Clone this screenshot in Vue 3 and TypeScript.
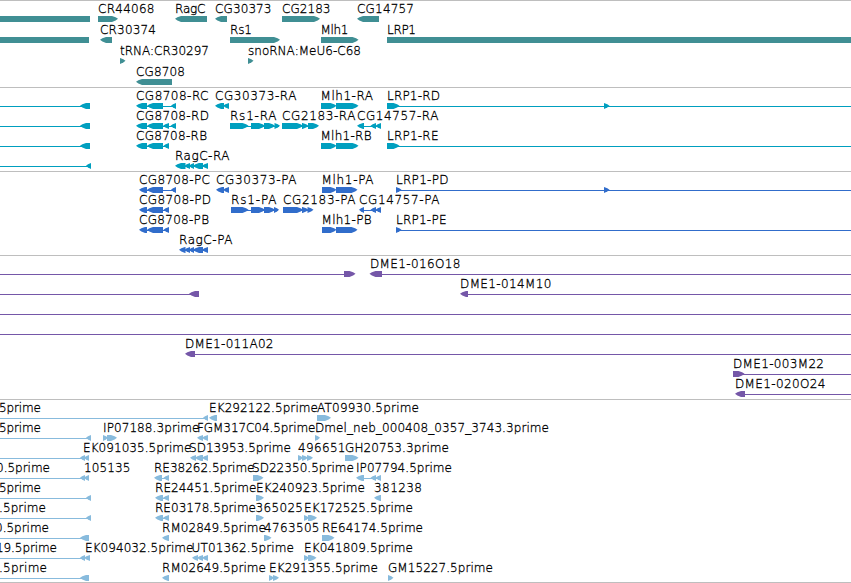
<template>
  <main class="browser">
    <section v-for="track in tracks" :key="track.name" class="track" :class="`track--${track.name}`">
      <svg v-for="(row, i) in track.rows" :key="i" class="track-row">
        <!-- Introns / clone spans -->
        <rect
          v-for="([from, to], n) in row.lines ?? []"
          :key="`l${n}`"
          :x="from"
          y="18"
          :width="to - from"
          height="1"
        />

        <!-- Exons -->
        <path v-for="(shape, n) in row.shapes" :key="`s${n}`" :d="shapePath(shape)" />

        <!-- Labels -->
        <text
          v-for="([from, to, name], n) in row.labels"
          :key="`t${n}`"
          class="label"
          :x="from"
          y="12"
          :textLength="to - from + 0.5"
        >{{ name }}</text>
      </svg>
    </section>
  </main>
</template>

<script setup lang="ts">
type Strand = '+' | '-' | '.'
type Shape = [from: number, to: number, strand: Strand]
type Label = [from: number, to: number, name: string]

interface Row {
  labels: Label[]
  shapes: Shape[]
  lines?: [number, number][]
}

interface Track {
  name: string
  rows: Row[]
}

const END = 851

const tracks: Track[] = [
  {
    name: 'gene',
    rows: [
      {
        labels: [[98, 154, 'CR44068'], [175, 205, 'RagC'], [215, 271, 'CG30373'], [282, 330, 'CG2183'], [357, 413.5, 'CG14757']],
        shapes: [[0, 90, '.'], [98, 118, '+'], [175, 207, '-'], [215, 227, '-'], [282, 320, '+'], [357, 379, '-']]
      },
      {
        labels: [[100, 155.5, 'CR30374'], [230, 251.5, 'Rs1'], [320.5, 348, 'Mlh1'], [387, 415.5, 'LRP1']],
        shapes: [[0, 89, '.'], [100, 112, '-'], [230, 280, '+'], [321, 358.5, '+'], [387, END, '.']]
      },
      {
        labels: [[120, 208.5, 'tRNA:CR30297'], [248, 360.5, 'snoRNA:MeU6-C68']],
        shapes: [[120, 125.5, '+'], [248, 253.5, '+']]
      },
      {
        labels: [[136, 184.5, 'CG8708']],
        shapes: [[136, 172, '-']]
      }
    ]
  },
  {
    name: 'transcript',
    rows: [
      {
        labels: [[136, 208, 'CG8708-RC'], [215, 296, 'CG30373-RA'], [320.5, 372.5, 'Mlh1-RA'], [387, 439.5, 'LRP1-RD']],
        lines: [[0, 82], [138, 174], [387, END]],
        shapes: [[80, 90, '-'], [136, 147, '-'], [147, 163, '-'], [171, 176, '-'], [215, 224, '-'], [223, 229, '-'], [321, 336.5, '+'], [336, 358.5, '+'], [387, 399.5, '+'], [604, 609.5, '+']]
      },
      {
        labels: [[136, 208.5, 'CG8708-RD'], [230, 276, 'Rs1-RA'], [282, 355, 'CG2183-RA'], [357, 438, 'CG14757-RA']],
        lines: [[0, 82], [138, 174], [230, 279], [282, 310], [360, 380]],
        shapes: [[80, 90, '-'], [136, 147, '-'], [147, 163, '-'], [163, 169, '-'], [170.5, 176, '-'], [230, 248.5, '+'], [251, 265, '+'], [264, 275, '+'], [274.5, 280, '+'], [282, 303, '+'], [302, 308.5, '+'], [308, 319, '+'], [357, 364, '-'], [370.5, 376, '-'], [375.5, 381, '-']]
      },
      {
        labels: [[136, 206.5, 'CG8708-RB'], [320.5, 371, 'Mlh1-RB'], [387, 438, 'LRP1-RE']],
        lines: [[0, 82], [138, 167], [387, END]],
        shapes: [[80, 90, '-'], [136, 147, '-'], [147, 163, '-'], [163.5, 169, '-'], [321, 336.5, '+'], [336, 358.5, '+'], [387, 399.5, '+']]
      },
      {
        labels: [[175, 229, 'RagC-RA']],
        lines: [[0, 88], [178, 206]],
        shapes: [[86, 91, '-'], [175, 185.5, '-'], [184.5, 190, '-'], [189, 194, '-'], [193, 203, '-'], [202, 208, '-']]
      }
    ]
  },
  {
    name: 'protein',
    rows: [
      {
        labels: [[139, 209.5, 'CG8708-PC'], [216, 296, 'CG30373-PA'], [321.5, 373, 'Mlh1-PA'], [396, 448, 'LRP1-PD']],
        lines: [[141, 174], [396, END]],
        shapes: [[139, 147, '-'], [147, 163, '-'], [171, 176, '-'], [216, 224, '-'], [223, 229, '-'], [322, 336.5, '+'], [336, 357.5, '+'], [396, 401.5, '+'], [604, 609.5, '+']]
      },
      {
        labels: [[139, 210.5, 'CG8708-PD'], [231, 276, 'Rs1-PA'], [283, 355, 'CG2183-PA'], [359, 439, 'CG14757-PA']],
        lines: [[141, 167], [231, 278], [283, 311], [361, 380]],
        shapes: [[139, 147, '-'], [147, 163, '-'], [163.5, 169, '-'], [231, 248.5, '+'], [251, 265, '+'], [264, 275, '+'], [274, 279, '+'], [283, 303, '+'], [302, 308.5, '+'], [307.5, 313.5, '+'], [359, 364, '-'], [370.5, 376, '-'], [375.5, 381, '-']]
      },
      {
        labels: [[139, 208.5, 'CG8708-PB'], [321.5, 371, 'Mlh1-PB'], [396, 446, 'LRP1-PE']],
        lines: [[141, 167], [396, END]],
        shapes: [[139, 147, '-'], [147, 163, '-'], [163.5, 169, '-'], [322, 336.5, '+'], [336, 357.5, '+'], [396, 401.5, '+']]
      },
      {
        labels: [[179, 232, 'RagC-PA']],
        lines: [[181, 206]],
        shapes: [[179, 185.5, '-'], [184.5, 190, '-'], [189, 194, '-'], [193, 203, '-'], [202, 208, '-']]
      }
    ]
  },
  {
    name: 'clone',
    rows: [
      {
        labels: [[370, 460, 'DME1-016O18']],
        lines: [[0, 346], [372, END]],
        shapes: [[344, 355.5, '+'], [369.5, 382, '-']]
      },
      {
        labels: [[460, 551, 'DME1-014M10']],
        lines: [[0, 192], [462, END]],
        shapes: [[189, 199, '-'], [460, 468, '-']]
      },
      { labels: [], lines: [[0, END]], shapes: [] },
      { labels: [], lines: [[0, END]], shapes: [] },
      {
        labels: [[185, 273, 'DME1-011A02']],
        lines: [[187, END]],
        shapes: [[185, 195, '-']]
      },
      {
        labels: [[733, 823.5, 'DME1-003M22']],
        lines: [[735, END]],
        shapes: [[733, 744.5, '+']]
      },
      {
        labels: [[735, 825, 'DME1-020O24']],
        lines: [[737, END]],
        shapes: [[735, 745, '-']]
      }
    ]
  },
  {
    name: 'est',
    rows: [
      {
        labels: [[-1, 40.5, '5prime'], [209, 317.5, 'EK292122.5prime'], [317, 418.5, 'AT09930.5prime']],
        lines: [[0, 206]],
        shapes: [[203, 208, '-'], [209, 217, '-'], [317, 331, '+']]
      },
      {
        labels: [[-1, 40.5, '5prime'], [103, 199, 'IP07188.3prime'], [197, 315, 'FGM317C04.5prime'], [315, 548.5, 'Dmel_neb_000408_0357_3743.3prime']],
        lines: [[0, 88]],
        shapes: [[86, 91, '-'], [103, 108, '+'], [107, 117, '+'], [197, 203, '-'], [202, 208, '-'], [315, 320, '+']]
      },
      {
        labels: [[83, 191, 'EK091035.5prime'], [189, 290.5, 'SD13953.5prime'], [298, 345, '496651'], [345, 448.5, 'GH20753.3prime']],
        lines: [[0, 82]],
        shapes: [[80, 85, '-'], [84, 89, '-'], [190, 196, '-'], [195, 203, '-'], [202, 208, '-'], [298, 303, '+'], [302, 308, '+'], [307, 313, '+'], [345, 358.5, '+']]
      },
      {
        labels: [[-4, 49.5, '0.5prime'], [84, 130, '105135'], [154, 254, 'RE38262.5prime'], [252, 353.5, 'SD22350.5prime'], [356, 451.5, 'IP07794.5prime']],
        lines: [[0, 82], [156, 167], [358, 380]],
        shapes: [[80, 85, '-'], [84, 89, '-'], [154, 162, '-'], [163.5, 169, '-'], [253, 263.5, '+'], [356, 364, '-'], [370.5, 376, '-'], [375.5, 381, '-']]
      },
      {
        labels: [[-1, 40.5, '5prime'], [155, 256, 'RE24451.5prime'], [256, 364.5, 'EK240923.5prime'], [374, 421.5, '381238']],
        lines: [[0, 88], [157, 167]],
        shapes: [[86, 91, '-'], [155, 163, '-'], [163, 169, '-'], [256, 264, '+'], [374, 381, '-']]
      },
      {
        labels: [[-1, 45.5, '.5prime'], [155, 255.5, 'RE03178.5prime'], [255.5, 302.5, '365025'], [304, 412.5, 'EK172525.5prime']],
        lines: [[0, 88], [157, 167]],
        shapes: [[86, 91, '-'], [155, 163, '-'], [163, 169, '-'], [256, 264, '+'], [304, 309, '+'], [308, 317, '+']]
      },
      {
        labels: [[-5, 48.5, '0.5prime'], [162, 265.5, 'RM02849.5prime'], [264, 319, '4763505'], [322, 422.5, 'RE64174.5prime']],
        lines: [[0, 82]],
        shapes: [[80, 89, '-'], [162, 169, '-'], [264, 271.5, '+'], [322, 334.5, '+']]
      },
      {
        labels: [[-4, 56.5, '19.5prime'], [85, 193, 'EK094032.5prime'], [191.5, 293.5, 'UT01362.5prime'], [304, 412.5, 'EK041809.5prime']],
        lines: [[0, 82]],
        shapes: [[80, 85, '-'], [84, 90, '-'], [192, 198, '-'], [197, 203, '-'], [202, 208, '-'], [304, 309, '+'], [308, 316.5, '+']]
      },
      {
        labels: [[-1, 46.5, '.5prime'], [162, 265.5, 'RM02649.5prime'], [269, 377.5, 'EK291355.5prime'], [388, 492.5, 'GM15227.5prime']],
        lines: [[0, 82]],
        shapes: [[80, 89, '-'], [162, 169, '-'], [269, 274, '+'], [273, 279, '+'], [388, 393.5, '+']]
      }
    ]
  }
]

// Block with a rounded-off head pointing along its strand
function shapePath([from, to, strand]: Shape) {
  if (strand === '.') return `M${from} 15H${to}V21H${from}Z`
  const dir = strand === '+' ? 1 : -1
  const tip = dir > 0 ? to : from
  const tail = dir > 0 ? from : to
  const head = Math.min(6, to - from)
  const base = tip - dir * head
  const mid = tip - dir * head * 0.4
  return `M${tail} 15H${base}L${mid} 16.3L${tip} 17.8L${mid} 19.5L${base} 21H${tail}Z`
}
</script>

<style>
body {
  background: #fff;
}
</style>

<style scoped>
.browser {
  width: 851px;
  height: 583px;
  box-sizing: border-box;
  border-bottom: 1px solid #bebebe;
  overflow: hidden;
  background: #fff;
}

.track {
  display: flex;
  flex-direction: column;
  padding-bottom: 3px;
  border-top: 1px solid #bebebe;
}

.track-row {
  display: block;
  width: 851px;
  height: 20px;
  flex-shrink: 0;
  overflow: visible;
}

.track--gene { padding-bottom: 2px; fill: #408f94; }
.track--gene .track-row { height: 21px; }
.track--transcript { fill: #009fbf; }
.track--protein { fill: #316dcb; }
.track--clone { fill: #7557a8; }
.track--est { padding-bottom: 2px; fill: #88bbdd; }

.label {
  fill: #000;
  stroke: #000;
  stroke-width: 0.3px;
  font-family: "DejaVu Sans", sans-serif;
  font-size: 12px;
  font-weight: 200;
}
</style>
